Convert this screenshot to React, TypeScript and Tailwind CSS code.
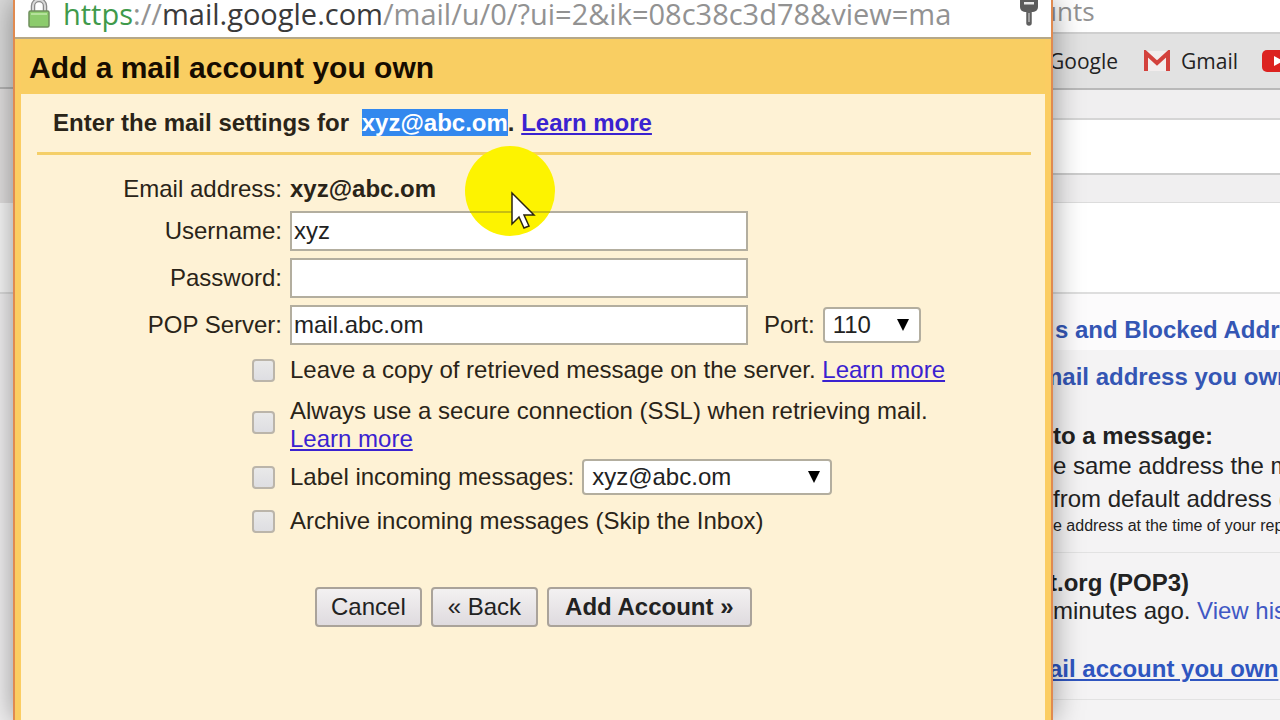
import type { ReactNode } from 'react';

interface FieldProps {
  id: string;
  label: string;
  children: ReactNode;
}

function Field({ id, label, children }: FieldProps) {
  return (
    <div className="flex h-[47px] items-center">
      <label htmlFor={id} className="w-[261px] shrink-0 pr-2 text-right">
        {label}
      </label>
      {children}
    </div>
  );
}

function TextBox({ id, value, type = 'text' }: { id: string; value?: string; type?: string }) {
  return (
    <input
      id={id}
      type={type}
      defaultValue={value}
      className="h-10 w-[458px] border-2 border-[#b3ae9f] bg-white px-0.5 text-[#222] outline-none"
    />
  );
}

function DropDown({ id, options, className }: { id: string; options: string[]; className: string }) {
  return (
    <div className={`relative ${className}`}>
      <select
        id={id}
        className="h-9 w-full appearance-none rounded-sm border-2 border-[#b3ae9f] bg-white pl-2 text-[#222] outline-none"
      >
        {options.map((option) => (
          <option key={option}>{option}</option>
        ))}
      </select>
      <svg viewBox="0 0 12 12" className="pointer-events-none absolute top-3 right-3 h-3 w-3" aria-hidden="true">
        <path d="M0 0h12L6 12z" fill="#000" />
      </svg>
    </div>
  );
}

function CheckBox({ id }: { id: string }) {
  return (
    <div className="w-[261px] shrink-0 pr-[15px]">
      <input
        id={id}
        type="checkbox"
        className="ml-auto block h-[23px] w-[23px] appearance-none rounded border-2 border-[#bbb5aa] bg-linear-to-b from-[#e9e9e9] to-[#dedee2]"
      />
    </div>
  );
}

function LearnMore() {
  return (
    <a href="#learn" className="text-[#3a22d0] underline decoration-2 underline-offset-2">
      Learn more
    </a>
  );
}

const buttonClass =
  'h-10 rounded-sm border-2 border-[#aaa39a] bg-linear-to-b from-[#f3f1f1] to-[#dfdbdf] text-[#222]';

function AddressBar() {
  return (
    <div className="flex h-[39px] items-start border-b-2 border-[#b5a888] bg-white px-3">
      <svg viewBox="0 0 24 30" className="h-[30px] w-6" aria-hidden="true">
        <path d="M6 13V6a6 6 0 0 1 12 0v7" fill="none" stroke="#8a8a8a" strokeWidth="4.5" />
        <path d="M6 13V6a6 6 0 0 1 12 0v7" fill="none" stroke="#d8d8d8" strokeWidth="2" />
        <rect x="2" y="11" width="20" height="16" rx="1.5" fill="#8ccb6c" stroke="#6f8f5c" strokeWidth="1.5" />
        <path d="M4 14h16" stroke="#b4e29a" strokeWidth="2" />
      </svg>
      <p className="ml-3 flex-1 font-['Open_Sans',sans-serif] text-[29px] leading-[28px] whitespace-nowrap text-[#929292]">
        <span className="text-[#3f9a4b]">https</span>://<span className="text-[#3a3a3a]">mail.google.com</span>
        /mail/u/0/?ui=2&amp;ik=08c38c3d78&amp;view=ma
      </p>
      <svg viewBox="0 0 20 26" className="h-[26px] w-5" aria-hidden="true">
        <rect x="1" y="-6" width="18" height="18" rx="5" fill="#5b5b5b" />
        <rect x="5" y="2" width="10" height="2.5" fill="#e8e8e8" />
        <path d="M10 12v11" stroke="#5f5f5f" strokeWidth="5.5" strokeLinecap="round" />
        <path d="M10 13v9" stroke="#b5b5b5" strokeWidth="1.5" />
      </svg>
    </div>
  );
}

// Mouse pointer with its highlight spot, lying over the form
function Pointer() {
  return (
    <svg viewBox="0 0 90 92" className="pointer-events-none absolute top-[145px] left-[450px] h-[92px] w-[90px]" aria-hidden="true">
      <circle cx="45" cy="46" r="45" fill="#fdf300" />
      <path d="M5 67h80" stroke="#b5ab18" strokeWidth="1.5" />
      <path d="M47 48v31l7-7 5 11 5-2-5-11h10z" fill="#fff" stroke="#2a2410" strokeWidth="1.5" />
    </svg>
  );
}

function MailDialog() {
  return (
    <div className="relative z-10 flex min-w-0 flex-1 flex-col border-x-2 border-[#e08a50] bg-[#fef2d5] shadow-[0_0_28px_rgba(0,0,0,0.4)]">
      <AddressBar />
      <main className="flex flex-1 flex-col border-x-[6px] border-[#fbcd62]">
        <h1 className="h-[55px] bg-[#f9ce62] pl-2 text-[30px] leading-[58px] font-bold text-[#160c00]">
          Add a mail account you own
        </h1>
        <h2 className="mr-3.5 ml-4 h-[61px] border-b-[3px] border-[#f5cf68] pl-4 text-2xl leading-[58px] font-bold">
          Enter the mail settings for{' '}
          <mark className="ml-1.5 bg-[#3388ee] text-white">xyz@abc.om</mark>. <LearnMore />
        </h2>
        <form className="pt-[15px] pl-2">
          <div className="flex h-[37px] items-center">
            <span className="w-[261px] pr-2 text-right">Email address:</span>
            <b>xyz@abc.om</b>
          </div>
          <Field id="username" label="Username:">
            <TextBox id="username" value="xyz" />
          </Field>
          <Field id="password" label="Password:">
            <TextBox id="password" type="password" />
          </Field>
          <Field id="server" label="POP Server:">
            <TextBox id="server" value="mail.abc.om" />
            <label htmlFor="port" className="mr-2 ml-4">
              Port:
            </label>
            <DropDown id="port" options={['110', '995']} className="w-[98px]" />
          </Field>
          <div className="flex h-11 items-center">
            <CheckBox id="copy" />
            <p>
              <label htmlFor="copy">Leave a copy of retrieved message on the server.</label> <LearnMore />
            </p>
          </div>
          <div className="flex h-[61px] items-center">
            <CheckBox id="ssl" />
            <p className="pt-1 leading-7">
              <label htmlFor="ssl">Always use a secure connection (SSL) when retrieving mail.</label>
              <br />
              <LearnMore />
            </p>
          </div>
          <div className="flex h-12 items-center">
            <CheckBox id="label" />
            <label htmlFor="label">Label incoming messages:</label>
            <DropDown id="label-name" options={['xyz@abc.om']} className="ml-2 w-[250px]" />
          </div>
          <div className="flex h-10 items-center">
            <CheckBox id="archive" />
            <label htmlFor="archive">Archive incoming messages (Skip the Inbox)</label>
          </div>
          <div className="flex gap-[9px] pt-[46px] pl-[286px]">
            <button type="button" className={`${buttonClass} px-3.5`}>
              Cancel
            </button>
            <button type="button" className={`${buttonClass} px-[15px]`}>
              « Back
            </button>
            <button type="submit" className={`${buttonClass} px-4 font-bold`}>
              Add Account »
            </button>
          </div>
        </form>
      </main>
      <Pointer />
    </div>
  );
}

// Strip of the browser window that shows on the left of the dialog
function LeftEdge() {
  return (
    <div className="flex w-[13px] shrink-0 flex-col bg-[#f1f0f1]">
      <div className="h-[89px] border-b-2 border-[#b5b5b5] bg-[#dcdcdc]" />
      <div className="h-[114px] bg-[#e2e0e0]" />
      <div className="h-[91px] border-b-2 border-[#dcdcdc] bg-[#f8f8f8]" />
    </div>
  );
}

function SettingsPage() {
  return (
    <div className="flex w-[227px] shrink-0 flex-col overflow-hidden bg-[#f4f3f4] whitespace-nowrap text-[#222]">
      <div className="h-[34px] border-b-2 border-[#cfcfcf] bg-white">
        <p className="-ml-3 font-['Open_Sans',sans-serif] text-[26px] leading-[22px] text-[#929292]">unts</p>
      </div>
      <nav className="flex h-[56px] items-center border-b-2 border-[#b9b9b9] bg-[#e2e2e2] font-['Open_Sans',sans-serif] text-[21px]">
        <a href="#google" className="-ml-1 w-[94px] shrink-0">
          Google
        </a>
        <svg viewBox="0 0 28 22" className="h-[22px] w-7 shrink-0" aria-hidden="true">
          <path d="M2 1h24v20H2z" fill="#f2eded" />
          <path d="M3 21V3l11 10L25 3v18" fill="none" stroke="#d3413c" strokeWidth="4" />
        </svg>
        <a href="#gmail" className="ml-2.5">
          Gmail
        </a>
        <svg viewBox="0 0 32 22" className="ml-6 h-[22px] w-8 shrink-0" aria-hidden="true">
          <rect width="32" height="22" rx="5" fill="#dc2320" />
          <path d="M12 6v10l9-5z" fill="#fff" />
        </svg>
      </nav>
      <div className="h-[30px] border-b-2 border-[#d5d5d5] bg-[#f0eff0]" />
      <div className="h-[55px] border-b-2 border-[#cdcdcd] bg-white" />
      <div className="h-[28px] border-b border-[#dcdcdc] bg-[#f0eff0]" />
      <div className="h-[91px] border-b-2 border-[#dedede] bg-white" />
      <a href="#filters" className="block bg-[#fcfbfc] pt-4 pl-0.5 leading-10 font-bold text-[#3456b4]">
        s and Blocked Addresses
      </a>
      <a href="#send" className="-ml-3 block leading-[54px] font-bold text-[#3456b4]">
        mail address you own
      </a>
      <p className="pt-3.5 leading-9 font-bold">to a message:</p>
      <p className="leading-6">e same address the message</p>
      <p className="pt-1 leading-[34px]">from default address (</p>
      <p className="pb-4 text-base leading-5">e address at the time of your reply</p>
      <div className="border-y border-[#e2e2e2] pt-4">
        <p className="-ml-1 leading-7 font-bold">t.org (POP3)</p>
        <p className="leading-7">
          minutes ago.{' '}
          <a href="#history" className="text-[#4058c4]">
            View history
          </a>
        </p>
        <a
          href="#account"
          className="-ml-1 block pt-[26px] pb-3 leading-9 font-bold text-[#2f56c0] underline decoration-2 underline-offset-2"
        >
          ail account you own
        </a>
      </div>
    </div>
  );
}

export default function App() {
  return (
    <div className="flex h-screen overflow-hidden bg-[#f4f3f4] font-['Liberation_Sans',Arial,sans-serif] text-2xl text-[#2a2418]">
      <LeftEdge />
      <MailDialog />
      <SettingsPage />
    </div>
  );
}
